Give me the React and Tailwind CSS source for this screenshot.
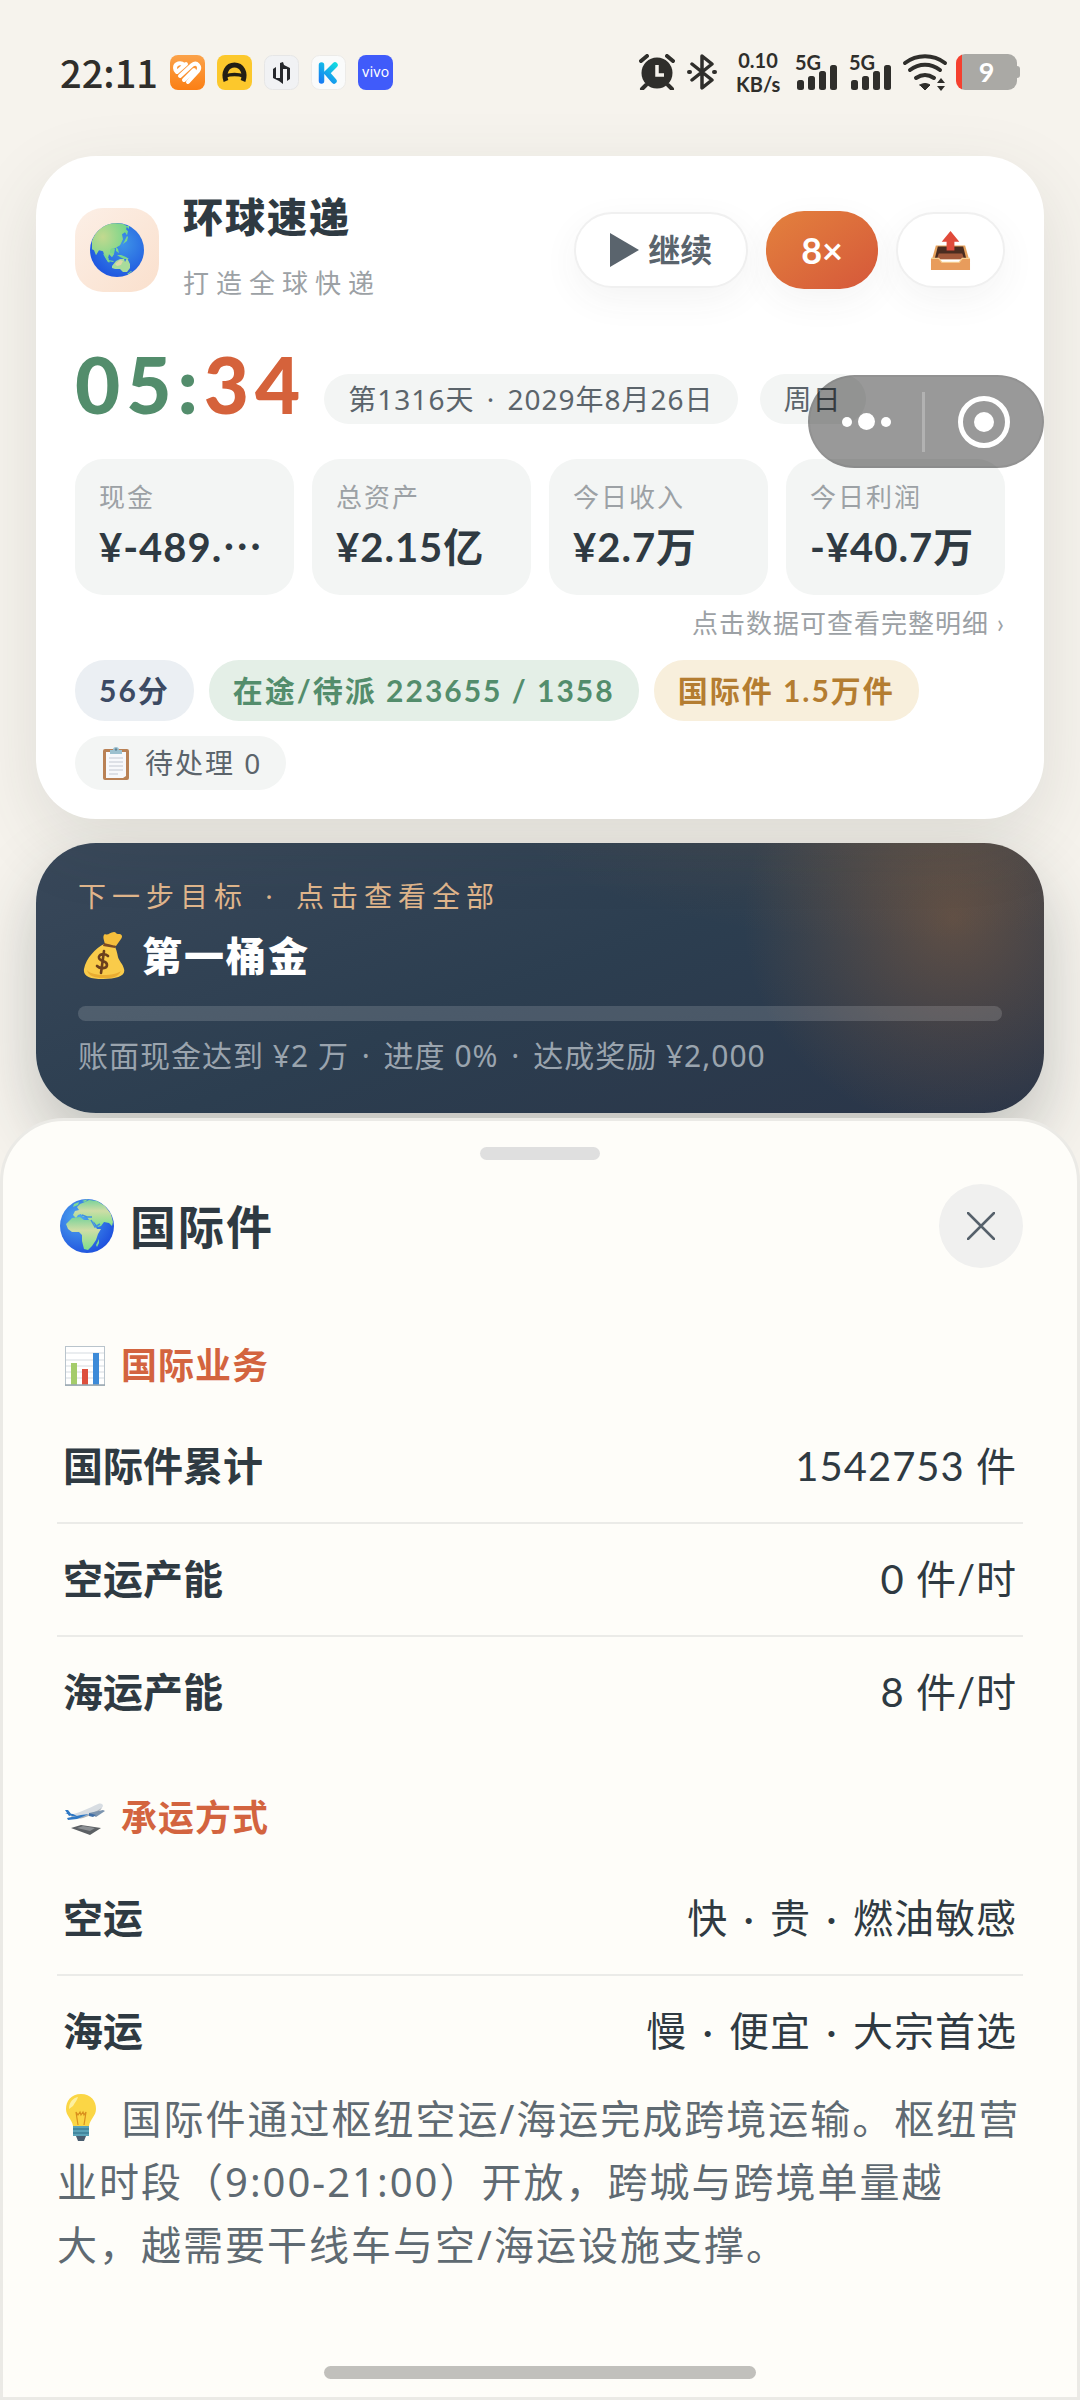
import React, { useState } from 'react'

const stats = [
  { label: '现金', value: '¥-489.', more: true },
  { label: '总资产', value: '¥2.15亿' },
  { label: '今日收入', value: '¥2.7万' },
  { label: '今日利润', value: '-¥40.7万' }
]

const business = [
  { label: '国际件累计', value: '1542753 件' },
  { label: '空运产能', value: '0 件/时' },
  { label: '海运产能', value: '8 件/时' }
]

const carriers = [
  { label: '空运', value: '快 · 贵 · 燃油敏感' },
  { label: '海运', value: '慢 · 便宜 · 大宗首选' }
]

/* ---------- emoji style icons ---------- */

function GlobeAsia({ className }) {
  return (
    <svg viewBox="0 0 54 54" className={className} aria-hidden="true">
      <defs>
        <radialGradient id="seaA" cx="60%" cy="38%" r="65%">
          <stop offset="0" stopColor="#3f95e8" />
          <stop offset="1" stopColor="#1f57e0" />
        </radialGradient>
        <radialGradient id="landA" cx="30%" cy="35%" r="70%">
          <stop offset="0" stopColor="#c3d98f" />
          <stop offset="1" stopColor="#74d68a" />
        </radialGradient>
      </defs>
      <circle cx="27" cy="27" r="27" fill="url(#seaA)" />
      <path d="M2 18C5 9 13 2 22 .6c3-.6 8-.4 12 .6l3 2-1 3 2 2-1 4-2-3-3 2 1 5-3 6-5 3-3 1 2 5-2 3-3-3-1 4 2 4-2 0-3-5-2-6-4-1-3 5-2-5-2-1z" fill="url(#landA)" />
      <path d="M19 36l-3-4-3-1 4 6zM20 27l2-2 3 1-1 5-4-1zM26 24l2 2 1 4-3-2zM27 32l4 0 5 2 3 2-5 0-4-2zM18 37l6 1-1 1-5-1zM35 17l2-4 1 1-1 4-4 3zM39 6l-3-3 3 0z" fill="#78d68e" />
      <path d="M22 43l4-5 4-2 4 0 1 3 2-4 3 6 0 4-3 4-4 0-3-3-5 0-3-1z" fill="#a9dc9b" />
      <path d="M25 41l5-4 3 1-2 4-4 1z" fill="#dfd8a8" />
      <path d="M41 48l1 0-3 3-2 0z" fill="#78d68e" />
    </svg>
  )
}

function GlobeAfrica({ className }) {
  return (
    <svg viewBox="0 0 54 54" className={className} aria-hidden="true">
      <defs>
        <radialGradient id="seaB" cx="35%" cy="35%" r="70%">
          <stop offset="0" stopColor="#4fa9f0" />
          <stop offset="1" stopColor="#1f52de" />
        </radialGradient>
        <linearGradient id="landB" x1="0" y1="0" x2="0" y2="1">
          <stop offset="0" stopColor="#79d39a" />
          <stop offset=".4" stopColor="#cfdda6" />
          <stop offset="1" stopColor="#7ee08c" />
        </linearGradient>
      </defs>
      <circle cx="27" cy="27" r="27" fill="url(#seaB)" />
      <path d="M13 16l2-4 4-1-2-3 3-3 5-2 4-2 8 1 8 5 6 8 2 8-1 4-3-3-5-1-3 4-3 1-4-5-5-2-2-3-4 0-2-3-3 1-2 3z" fill="url(#landB)" />
      <path d="M6 25l6-6 8-1 4 3 8 0 5 9 4 0-3 5-2 6-4 6-4 4-4-1-2-8 0-6-3-3-7 0-4-3z" fill="url(#landB)" />
      <path d="M36 46l3-6 0 4-2 4zM14 5l5-2-1 3-5 2zM22 2l6-2-3 3z" fill="#7edb94" />
      <path d="M31 21l4 7 5-3M22 16l5 2 5 0" fill="none" stroke="#3f92df" strokeWidth="1.5" />
    </svg>
  )
}

function Outbox({ className }) {
  return (
    <svg viewBox="0 0 42 42" className={className} aria-hidden="true">
      <path d="M6 16h30l4 14H2z" fill="#e6a25d" />
      <path d="M8 17h26l3 12H5z" fill="#4a2c20" />
      <path d="M9 24h24l2 6H7z" fill="#a0583a" />
      <path d="M1 29h8l3 4h18l3-4h8v12H1z" fill="#e89c5c" />
      <path d="M1 29h8l3 4h18l3-4h8" fill="none" stroke="#f7cf90" strokeWidth="1.2" />
      <path d="M21 1l9 11h-5v9h-8v-9h-5z" fill="#e04a3a" />
    </svg>
  )
}

function Clipboard({ className }) {
  return (
    <svg viewBox="0 0 26 34" className={className} aria-hidden="true">
      <rect x="0" y="3" width="26" height="31" rx="2" fill="#b98155" />
      <path d="M3 6h20v24l-3 2H3z" fill="#f7f8fb" />
      <path d="M6 12h14M6 16h14M6 20h14M6 24h14M6 28h9" stroke="#c3c8d2" strokeWidth="1" />
      <path d="M7 8V4h3a3 3 0 0 1 6 0h3v4z" fill="#9cc0cf" />
      <circle cx="13" cy="3.5" r="1.2" fill="#5f8496" />
    </svg>
  )
}

function MoneyBag({ className }) {
  return (
    <svg viewBox="0 0 42 48" className={className} aria-hidden="true">
      <path d="M22 2c3 2 5-2 9-2 2 0 2 2 4 2 4 0 5 2 3 5l-5 7-11-2c-1-4-3-8 0-10z" fill="#f6bf3c" />
      <path d="M21 12c-8 4-18 14-20 25-1 7 5 10 19 10s23-3 21-10c-1-5-5-8-6-12-1-5-2-9-4-12z" fill="#f9cb4a" />
      <path d="M21 11l12 3-1 2-12-2z" fill="#7a4a26" />
      <path d="M4 38c4 6 26 7 34 1-3 7-10 7-18 7S5 44 4 38z" fill="#e9ac31" />
      <path d="M25 24c-3-3-10-2-9 2 1 4 8 2 8 7 0 4-7 4-10 1M21 19l-3 22" fill="none" stroke="#6b3f1d" strokeWidth="2.6" strokeLinecap="round" />
    </svg>
  )
}

function BarChart({ className }) {
  return (
    <svg viewBox="0 0 40 40" className={className} aria-hidden="true">
      <rect x=".5" y=".5" width="39" height="39" fill="#fff" stroke="#b9c4cc" />
      <path d="M1 7h38M1 14h38M1 20h38M1 26h38M1 32h38" stroke="#d5dbe0" strokeWidth="1" />
      <rect x="6" y="17" width="6" height="22" fill="#a4cc6b" />
      <rect x="17" y="23" width="6" height="16" fill="#dd4f3c" />
      <rect x="28" y="7" width="6" height="32" fill="#3c8ad8" />
      <path d="M0 39h40" stroke="#9aa7b0" strokeWidth="1.5" />
    </svg>
  )
}

function Departure({ className }) {
  return (
    <svg viewBox="0 0 40 40" className={className} aria-hidden="true">
      <path d="M6 30l10-3 20 3-11 7z" fill="#5c6064" />
      <path d="M12 30l6-2 12 2-5 3z" fill="#8b8f93" />
      <path d="M5 17C14 15 24 10 33 6c3-1 5 0 5 2-1 4-12 8-20 11-5 1-10 1-13-2z" fill="#d8dde2" />
      <path d="M5 17c4 3 12 2 18-.5 5-2 11-4 14-7-2 5-12 8-19 10.500-5 1-10 1-13-3z" fill="#a8b0b8" />
      <path d="M0 12l3 0 4 5-3 1zM0 15l8 1 4 2-5 0zM2 20l14-3 8-1-12 5-9 1z" fill="#2f78c4" />
      <path d="M24 15l14-3 2 1-9 6z" fill="#7c94ae" />
      <path d="M24 15l7 2-3 2-4-1z" fill="#3f6ea6" />
    </svg>
  )
}

function Bulb({ className }) {
  return (
    <svg viewBox="0 0 32 48" className={className} aria-hidden="true">
      <path d="M16 0C6 0 1 7 1 15c0 7 6 10 7 17h16c1-7 7-10 7-17C31 7 26 0 16 0z" fill="#fbd645" />
      <path d="M4 15C4 8 8 4 13 3c-1 4-3 5-5 9z" fill="#fdf0a0" />
      <path d="M13 31l-2-13 2 3 2-3 1 3 2-3 1 3 2-3-2 13" fill="none" stroke="#d98e1c" strokeWidth="1.2" />
      <path d="M8 32h16v10H8z" fill="#5ba3b8" />
      <path d="M8 35h16M8 39h16" stroke="#3d7f97" strokeWidth="1.5" />
      <path d="M11 42h10l-2 5h-6z" fill="#4a5d70" />
    </svg>
  )
}

/* ---------- status bar ---------- */

function Signal() {
  return (
    <div className="relative w-[43px] h-9">
      <span className="absolute left-0 top-0 text-[20px] leading-4 font-bold">5G</span>
      <svg viewBox="0 0 43 36" className="w-full h-full" fill="currentColor" aria-hidden="true">
        <rect x="2" y="26" width="7" height="10" rx="2.500" />
        <rect x="13" y="22" width="7" height="14" rx="2.500" />
        <rect x="24" y="17" width="7" height="19" rx="2.500" />
        <rect x="35" y="11" width="7" height="25" rx="2.500" />
      </svg>
    </div>
  )
}

function StatusBar() {
  return (
    <header className="flex items-center justify-between h-36 px-[60px] text-[#2f2e2b]">
      <div className="flex items-center gap-3">
        <span className="font-['Noto_Sans_CJK_SC',sans-serif] text-[38px] leading-[48px] font-medium">22:11</span>
        <svg viewBox="0 0 35 35" className="w-[35px] h-[35px]" aria-hidden="true">
          <defs>
            <linearGradient id="orangeApp" x1="0" y1="0" x2="0" y2="1">
              <stop offset="0" stopColor="#fba24a" />
              <stop offset="1" stopColor="#fb7f14" />
            </linearGradient>
          </defs>
          <rect width="35" height="35" rx="8" fill="url(#orangeApp)" />
          <path d="M14 10c-3-3-9-2-9 3 0 2 1 3 2 4M7 17l9-8M10 21l12-11c5-4 9 2 6 6l-10 11M14 25l10-10" fill="none" stroke="#fff" strokeWidth="4" strokeLinecap="round" />
        </svg>
        <svg viewBox="0 0 35 35" className="w-[35px] h-[35px]" aria-hidden="true">
          <rect width="35" height="35" rx="8" fill="#fcc82c" />
          <path d="M9 26c-3-8 1-16 8.500-16S29 18 26 26" fill="none" stroke="#231f15" strokeWidth="5" />
          <path d="M8 21q9.500-3 19 0" fill="none" stroke="#231f15" strokeWidth="3.500" />
        </svg>
        <svg viewBox="0 0 35 35" className="w-[35px] h-[35px]" aria-hidden="true">
          <rect x=".5" y=".5" width="34" height="34" rx="8" fill="#f1f2f4" stroke="#e6e6e6" />
          <path d="M9 14l3-2v11h4v-4h3v10l-4-3-6-3zM19 7l1 3 6 3v11l-3 2V14h-4v5h-3V8z" fill="#26282c" />
        </svg>
        <svg viewBox="0 0 35 35" className="w-[35px] h-[35px]" aria-hidden="true">
          <defs>
            <linearGradient id="kApp" gradientUnits="userSpaceOnUse" x1="8" y1="28" x2="26" y2="8">
              <stop offset="0" stopColor="#1673f5" />
              <stop offset="1" stopColor="#12e0e0" />
            </linearGradient>
          </defs>
          <rect x=".5" y=".5" width="34" height="34" rx="8" fill="#fafbfb" stroke="#ecebe8" />
          <path d="M10.500 10v16M24 10l-8 8 7 8" fill="none" stroke="url(#kApp)" strokeWidth="5.500" strokeLinecap="round" />
        </svg>
        <span className="w-[35px] h-[35px] rounded-lg bg-[#405bfa] text-white text-[14px] leading-[34px] text-center font-['Inter',sans-serif]">vivo</span>
      </div>

      <div className="flex items-center">
        <svg viewBox="0 0 36 36" className="w-9 h-9" aria-hidden="true">
          <circle cx="18" cy="19" r="15.500" fill="currentColor" />
          <path d="M2 7l6-5M34 7l-6-5M7 31l-4 4M29 31l4 4" stroke="currentColor" strokeWidth="4" strokeLinecap="round" />
          <path d="M18 11v10h7" fill="none" stroke="#f6f3ed" strokeWidth="3.500" />
        </svg>
        <svg viewBox="0 0 30 36" className="w-[30px] h-9 ml-3" fill="none" stroke="currentColor" strokeWidth="3.500" strokeLinejoin="round" strokeLinecap="round" aria-hidden="true">
          <path d="M5 10l20 16-10 8V2l10 8L5 26" />
          <path d="M2 18h1M27 18h1" strokeWidth="4" />
        </svg>
        <div className="ml-[19px] w-11 font-bold text-[20px] leading-6 text-center">
          <div>0.10</div>
          <div>KB/s</div>
        </div>
        <div className="ml-[15px] flex gap-[11px]">
          <Signal />
          <Signal />
        </div>
        <svg viewBox="0 0 46 38" className="w-[46px] h-[38px] ml-[10px]" fill="none" stroke="currentColor" strokeWidth="4" strokeLinecap="round" aria-hidden="true">
          <path d="M3 10c12-9 28-9 40 0M8 17c9-7 21-7 30 0M14 25c6-4 12-4 18 0" />
          <path d="M18 32l5 5 5-5c-3-2-7-2-10 0z" fill="currentColor" strokeWidth="1" />
          <path d="M35 30h8l-4-5zM35 33h8l-4 5z" fill="currentColor" stroke="none" />
        </svg>
        <div className="ml-2 flex items-center">
          <div className="w-[61px] h-9 rounded-[9px] bg-[linear-gradient(90deg,#f5402f_6px,#aaa9a5_6px)] text-white text-[27px] leading-9 font-bold text-center">9</div>
          <div className="w-[3px] h-3 rounded-r bg-[#aaa9a5]" />
        </div>
      </div>
    </header>
  )
}

/* ---------- page parts ---------- */

// gives the middle dots some air on both sides
function Dotted({ text }) {
  return text.split('·').map((part, i) => (
    <React.Fragment key={i}>
      {i > 0 && <span className="mx-1">·</span>}
      {part}
    </React.Fragment>
  ))
}

function Overview({ paused, onToggle }) {
  return (
    <section className="relative rounded-[60px] bg-white px-[39px] pt-7 pb-[29px] shadow-[0_24px_72px_rgba(60,66,60,0.13)]">
      <div className="flex items-center">
        <div className="w-[84px] h-[84px] rounded-[28px] bg-linear-to-br from-[#fcefe6] to-[#fae0cd] flex items-center justify-center">
          <GlobeAsia className="w-[54px] h-[54px]" />
        </div>
        <div className="ml-6">
          <h1 className="text-[40px] leading-[66px] tracking-[2px] font-black">环球速递</h1>
          <p className="text-[26px] leading-[66px] tracking-[7px] text-[#9ca1a5]">打造全球快递</p>
        </div>
        <div className="ml-auto flex items-center gap-[18px]">
          <button
            onClick={onToggle}
            className="h-[76px] px-[34px] rounded-[38px] border-2 border-[#f0f0f0] bg-white flex items-center gap-[9px] text-[32px] font-bold text-[#5a646d] shadow-[0_12px_36px_rgba(60,60,60,0.06)]"
          >
            <svg viewBox="0 0 29 34" className="w-[29px] h-[34px]" aria-hidden="true">
              <path d="M0 0l29 17L0 34z" fill="currentColor" />
            </svg>
            {paused ? '继续' : '暂停'}
          </button>
          <button className="h-[78px] px-[35px] rounded-[38px] bg-linear-to-br from-[#e3813d] to-[#d5573a] text-[36px] font-bold text-white shadow-[0_12px_36px_rgba(60,60,60,0.06)]">8×</button>
          <button aria-label="导出" className="h-[76px] px-8 rounded-[38px] border-2 border-[#f0f0f0] bg-white shadow-[0_12px_36px_rgba(60,60,60,0.06)]">
            <Outbox className="w-[41px] h-[41px]" />
          </button>
        </div>
      </div>

      <div className="mt-7 flex items-end">
        <div className="text-[78px] leading-[80px] tracking-[6px] font-black text-[#538d6c]">
          05:<span className="text-[#d5623b]">34</span>
        </div>
        <div className="ml-[18px] flex gap-[22px] font-['Noto_Sans','Noto_Sans_CJK_SC',sans-serif] text-[28px] leading-[50px] tracking-[1px] text-[#5b646b]">
          <span className="rounded-[25px] bg-[#f3f5f4] px-6"><Dotted text="第1316天 · 2029年8月26日" /></span>
          <span className="rounded-[25px] bg-[#f3f5f4] px-6">周日</span>
        </div>
      </div>

      {/* mini program capsule */}
      <div className="absolute right-0 top-[219px] flex h-[93px] w-[236px] items-center rounded-full border-2 border-black/5 bg-black/40">
        <button aria-label="更多" className="flex w-28 items-center justify-center gap-[6px]">
          <span className="w-[10px] h-[10px] rounded-full bg-white" />
          <span className="w-[17px] h-[17px] rounded-full bg-white" />
          <span className="w-[10px] h-[10px] rounded-full bg-white" />
        </button>
        <span className="w-[3px] h-[60px] bg-white/25" />
        <button aria-label="关闭小程序" className="flex flex-1 items-center justify-center">
          <span className="flex w-[52px] h-[52px] items-center justify-center rounded-full border-[5px] border-white">
            <span className="w-5 h-5 rounded-full bg-white" />
          </span>
        </button>
      </div>

      <div className="mt-[35px] grid grid-cols-4 gap-[18px]">
        {stats.map(s => (
          <div key={s.label} className="rounded-[28px] bg-[#f3f5f4] px-6 py-[18px]">
            <div className="text-[26px] leading-10 tracking-[2px] text-[#9ca1a5]">{s.label}</div>
            <div className="text-[40px] leading-[60px] tracking-[1px] font-bold whitespace-nowrap">
              {s.value}
              {s.more && <span className="font-['Noto_Sans_CJK_SC',sans-serif] leading-none">⋯</span>}
            </div>
          </div>
        ))}
      </div>
      <p className="mt-1 text-right text-[26px] leading-[48px] tracking-[1px] text-[#9ca1a5]">点击数据可查看完整明细 ›</p>

      <div className="mt-[13px] flex flex-wrap gap-[15px] text-[30px] leading-[61px] tracking-[2px] font-bold">
        <span className="rounded-[30px] bg-[#ebeff3] px-6 text-[#3c4a63]">56分</span>
        <span className="rounded-[30px] bg-[#e4efe7] px-6 text-[#538d6c]">在途/待派 223655 / 1358</span>
        <span className="rounded-[30px] bg-[#f8efdc] px-6 text-[#b47d31]">国际件 1.5万件</span>
        <span className="flex items-center rounded-[27px] bg-[#f3f5f4] pl-7 pr-6 text-[28px] leading-[54px] font-normal text-[#5b646b] font-['Noto_Sans','Noto_Sans_CJK_SC',sans-serif]">
          <Clipboard className="mr-4 w-[26px] h-[34px]" />
          待处理 0
        </span>
      </div>
    </section>
  )
}

function Goal() {
  return (
    <section className="mt-6 rounded-[60px] bg-[radial-gradient(circle_at_91%_28%,rgba(214,124,50,0.3),transparent_210px),radial-gradient(ellipse_at_85%_-20%,rgba(214,124,50,0.14),transparent_400px),linear-gradient(160deg,#39485a,#2c3e50_50%,#2a3548)] px-[42px] py-[33px] shadow-[0_30px_66px_rgba(40,50,50,0.26)]">
      <p className="font-['Noto_Sans','Noto_Sans_CJK_SC',sans-serif] text-[28px] leading-10 tracking-[6px] text-[#e0b68c]"><Dotted text="下一步目标 · 点击查看全部" /></p>
      <h2 className="mt-2 flex items-center text-[40px] leading-[64px] tracking-[2px] font-black text-white">
        <MoneyBag className="ml-[5px] mr-[17px] w-[42px] h-12" />
        第一桶金
      </h2>
      <div className="mt-[18px] h-[15px] rounded-full bg-white/15" />
      <p className="mt-[11px] font-['Noto_Sans','Noto_Sans_CJK_SC',sans-serif] text-[30px] leading-[48px] tracking-[1px] text-[#9aa4ae]"><Dotted text="账面现金达到 ¥2 万 · 进度 0% · 达成奖励 ¥2,000" /></p>
    </section>
  )
}

function DataList({ icon, title, rows, className }) {
  return (
    <div className={className}>
      <h3 className="flex items-center gap-4 pl-2 text-[36px] leading-[48px] tracking-[1px] font-bold text-[#d3643f]">
        {icon}
        {title}
      </h3>
      <dl className="mt-[21px] text-[40px] font-['Lato','Noto_Sans_CJK_SC',sans-serif]">
        {rows.map(r => (
          <div key={r.label} className="flex justify-between border-b-2 border-[#ebebe8] px-[6px] leading-[111px] last:border-b-0">
            <dt className="font-bold">{r.label}</dt>
            <dd className="tracking-[1px]"><Dotted text={r.value} /></dd>
          </div>
        ))}
      </dl>
    </div>
  )
}

export default function App() {
  const [paused, setPaused] = useState(true)

  return (
    <div className="flex min-h-screen flex-col overflow-hidden bg-[#f6f3ed] font-['Lato','Noto_Sans_CJK_SC',sans-serif] text-[#2f3a42]" lang="zh-CN">
      <StatusBar />
      <main className="px-9 pt-3">
        <Overview paused={paused} onToggle={() => setPaused(!paused)} />
        <Goal />
      </main>

      <section className="relative mt-[5px] flex flex-1 flex-col rounded-t-[64px] border-[3px] border-[#ebeae6] bg-[#fefdf9] px-[54px] pt-[26px] pb-[18px] font-['Noto_Sans','Noto_Sans_CJK_SC',sans-serif]">
        <div className="mx-auto w-[120px] h-[13px] rounded-full bg-[#dfdfdf]" />
        <div className="mt-6 flex items-center">
          <GlobeAfrica className="ml-[3px] w-[54px] h-[54px]" />
          <h2 className="ml-4 text-[46px] leading-[64px] tracking-[2px] font-bold">国际件</h2>
          <button aria-label="关闭" className="ml-auto flex w-[84px] h-[84px] items-center justify-center rounded-full bg-[#f0f0ef] text-[#56616b]">
            <svg viewBox="0 0 28 28" className="w-7 h-7" fill="none" stroke="currentColor" strokeWidth="2.500" strokeLinecap="round" aria-hidden="true">
              <path d="M1 1l26 26M27 1L1 27" />
            </svg>
          </button>
        </div>

        <DataList className="mt-[74px]" icon={<BarChart className="w-10 h-10" />} title="国际业务" rows={business} />
        <DataList className="mt-[46px]" icon={<Departure className="w-10 h-10" />} title="承运方式" rows={carriers} />

        <p className="-mr-1 text-[40px] leading-[63px] tracking-[2px] text-[#5f6a72]">
          <Bulb className="ml-2 mr-3 inline-block w-8 h-12 align-[-8px]" /> 国际件通过枢纽空运/海运完成跨境运输。枢纽营业时段（9:00-21:00）开放，跨城与跨境单量越大，越需要干线车与空/海运设施支撑。
        </p>
        <div className="mx-auto mt-auto w-[432px] h-[13px] rounded-full bg-[#c1c0bc]" />
      </section>
    </div>
  )
}
